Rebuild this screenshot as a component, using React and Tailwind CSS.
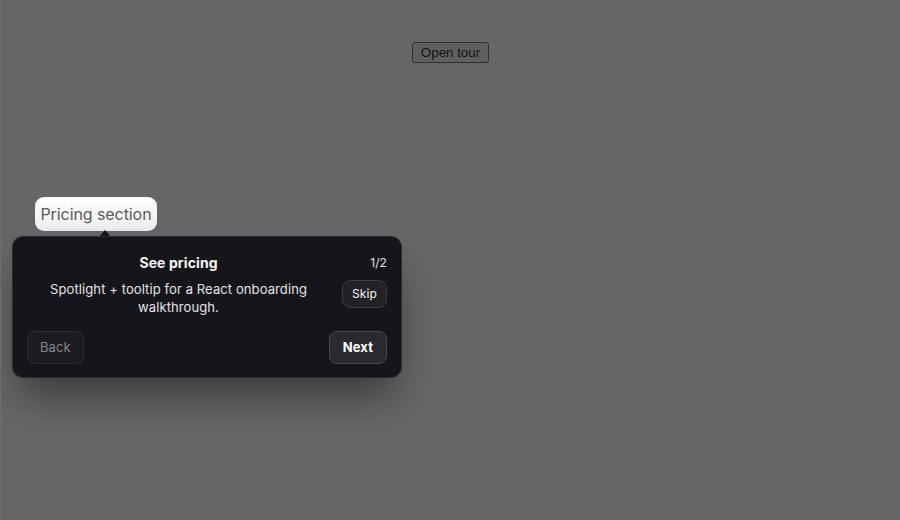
import React from "react";

export default function App() {
  return (
    <div className="relative w-[900px] h-[520px] overflow-hidden bg-[#666666] border-l border-[#6f6f6f]" style={{ fontFamily: "Inter, 'Noto Sans', sans-serif" }}>
      <div className="flex justify-center pt-[42px]">
        <button className="h-[21px] px-[8px] rounded-[3px] border border-[#2e2e2e] bg-[#606060] text-[13.33px] leading-none text-[#111]" style={{ fontFamily: "'Liberation Sans', Arial, sans-serif" }}>
          Open tour
        </button>
      </div>

      <div className="absolute left-[34px] top-[197px] w-[122px] h-[34px] rounded-[9px] bg-gradient-to-b from-white to-[#ececec] flex items-center justify-center text-[16px] tracking-[-0.005em] text-[#5a5a5a]">
        Pricing section
      </div>

      <div className="absolute left-[98px] top-[230px] w-0 h-0 border-l-[6px] border-r-[6px] border-b-[7px] border-l-transparent border-r-transparent border-b-[#16161a]" />

      <div className="absolute left-[11px] top-[236px] w-[390px] h-[142px] rounded-[11px] bg-[#16161a] border border-[#2a2a2f] shadow-[0_24px_40px_-8px_rgba(0,0,0,0.45)] px-[14px] pt-[16px] pb-[13px] text-white tracking-[0.006em]">
        <div className="flex gap-[14px]">
          <div className="flex-1 text-center pl-[2px]">
            <div className="text-[14px] leading-[20px] font-bold text-[#f4f4f5]">See pricing</div>
            <div className="mt-[7px] text-[13px] leading-[18px] text-[#e4e4e7] px-[12px]">
              Spotlight + tooltip for a React onboarding walkthrough.
            </div>
          </div>
          <div className="flex flex-col items-end">
            <div className="text-[12px] leading-[18px] text-[#e4e4e7] mt-[1px]">1/2</div>
            <button className="mt-[8px] h-[28px] px-[9px] rounded-[8px] border border-[#3a3a40] bg-[#222226] text-[12px] text-[#f4f4f5]">
              Skip
            </button>
          </div>
        </div>
        <div className="mt-[15px] flex justify-between">
          <button className="h-[33px] px-[12px] rounded-[8px] border border-[#2c2c31] bg-[#1c1c20] text-[13px] text-[#85858b]">
            Back
          </button>
          <button className="h-[33px] px-[13px] rounded-[8px] border border-[#48484e] bg-[#2a2a2e] text-[13px] font-bold text-white">
            Next
          </button>
        </div>
      </div>
    </div>
  );
}
